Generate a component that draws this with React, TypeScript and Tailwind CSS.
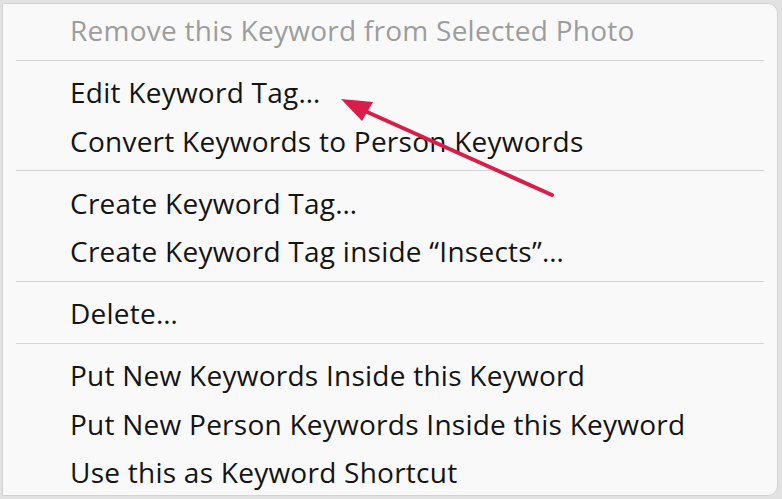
import React from 'react';

type Item = { label: string; disabled?: boolean };

const groups: Item[][] = [
  [{ label: 'Remove this Keyword from Selected Photo', disabled: true }],
  [{ label: 'Edit Keyword Tag…' }, { label: 'Convert Keywords to Person Keywords' }],
  [{ label: 'Create Keyword Tag…' }, { label: 'Create Keyword Tag inside “Insects”…' }],
  [{ label: 'Delete…' }],
  [
    { label: 'Put New Keywords Inside this Keyword' },
    { label: 'Put New Person Keywords Inside this Keyword' },
    { label: 'Use this as Keyword Shortcut' },
  ],
];

export default function App() {
  return (
    <div className="relative w-[782px] h-[499px] overflow-hidden bg-[#e2e2e2] pt-[3px] pl-[2px] pr-[4px] pb-[3px]">
      <div
        className="h-full rounded-tr-[10px] rounded-br-[10px] border border-[#d3d3d3] bg-[#f9f9f9] pt-[2px]"
        style={{ fontFamily: '"Open Sans", "Noto Sans", sans-serif' }}
      >
        {groups.map((g, gi) => (
          <div key={gi}>
            {gi > 0 && <div className="mx-[13px] mt-[5px] mb-[7.5px] h-px bg-[#d4d4d4]" />}
            {g.map((it) => (
              <div
                key={it.label}
                className={`h-[48.5px] pl-[67px] text-[28px] tracking-[0.25px] leading-[48px] whitespace-nowrap ${
                  it.disabled ? 'text-[#9d9d9d]' : 'text-[#141414]'
                }`}
              >
                {it.label}
              </div>
            ))}
          </div>
        ))}
      </div>

      {/* annotation arrow */}
      <svg className="absolute inset-0 pointer-events-none" width="782" height="499">
        <line x1="552" y1="195" x2="356" y2="107" stroke="#d81d4a" strokeWidth="4" strokeLinecap="round" />
        <polygon points="341,99 373,102 362,121" fill="#d81d4a" />
      </svg>
    </div>
  );
}
